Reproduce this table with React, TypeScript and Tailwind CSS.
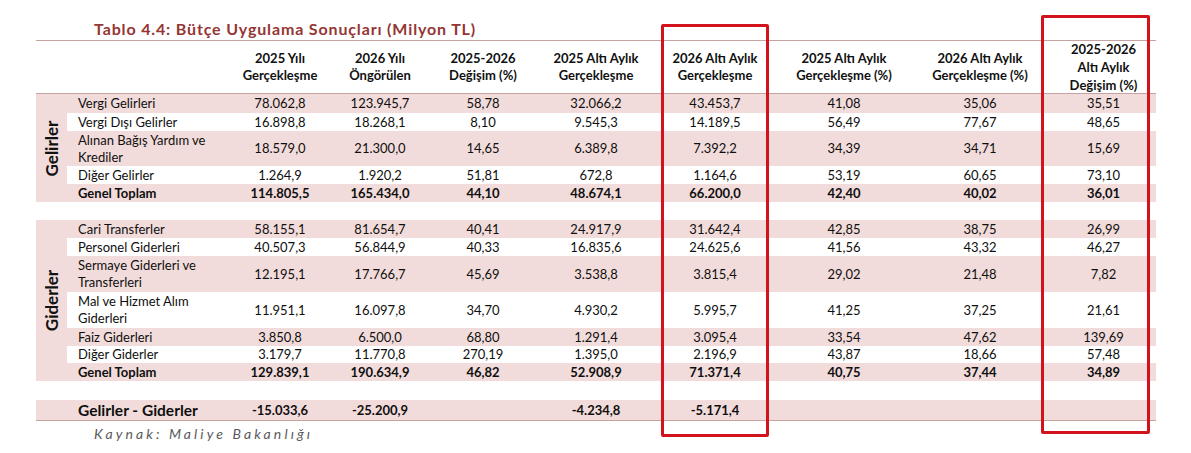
import React from "react"

type Row = {
    label: React.ReactNode
    values: string[]
    pink?: boolean
    bold?: boolean
    h?: string
}

const gelirler: Row[] = [
    { label: "Vergi Gelirleri", values: ["78.062,8", "123.945,7", "58,78", "32.066,2", "43.453,7", "41,08", "35,06", "35,51"], pink: true, h: "h-[19px]" },
    { label: "Vergi Dışı Gelirler", values: ["16.898,8", "18.268,1", "8,10", "9.545,3", "14.189,5", "56,49", "77,67", "48,65"] },
    { label: <>Alınan Bağış Yardım ve<br />Krediler</>, values: ["18.579,0", "21.300,0", "14,65", "6.389,8", "7.392,2", "34,39", "34,71", "15,69"], pink: true, h: "h-[35px]" },
    { label: "Diğer Gelirler", values: ["1.264,9", "1.920,2", "51,81", "672,8", "1.164,6", "53,19", "60,65", "73,10"] },
    { label: "Genel Toplam", values: ["114.805,5", "165.434,0", "44,10", "48.674,1", "66.200,0", "42,40", "40,02", "36,01"], pink: true, bold: true },
]

const giderler: Row[] = [
    { label: "Cari Transferler", values: ["58.155,1", "81.654,7", "40,41", "24.917,9", "31.642,4", "42,85", "38,75", "26,99"], pink: true },
    { label: "Personel Giderleri", values: ["40.507,3", "56.844,9", "40,33", "16.835,6", "24.625,6", "41,56", "43,32", "46,27"] },
    { label: <>Sermaye Giderleri ve<br />Transferleri</>, values: ["12.195,1", "17.766,7", "45,69", "3.538,8", "3.815,4", "29,02", "21,48", "7,82"], pink: true, h: "h-[36px]" },
    { label: <>Mal ve Hizmet Alım<br />Giderleri</>, values: ["11.951,1", "16.097,8", "34,70", "4.930,2", "5.995,7", "41,25", "37,25", "21,61"], h: "h-[36px]" },
    { label: "Faiz Giderleri", values: ["3.850,8", "6.500,0", "68,80", "1.291,4", "3.095,4", "33,54", "47,62", "139,69"], pink: true },
    { label: "Diğer Giderler", values: ["3.179,7", "11.770,8", "270,19", "1.395,0", "2.196,9", "43,87", "18,66", "57,48"], h: "h-[17px]" },
    { label: "Genel Toplam", values: ["129.839,1", "190.634,9", "46,82", "52.908,9", "71.371,4", "40,75", "37,44", "34,89"], pink: true, bold: true },
]

const headers: React.ReactNode[] = [
    <>2025 Yılı<br />Gerçekleşme</>,
    <>2026 Yılı<br />Öngörülen</>,
    <>2025-2026<br />Değişim (%)</>,
    <>2025 Altı Aylık<br />Gerçekleşme</>,
    <>2026 Altı Aylık<br />Gerçekleşme</>,
    <>2025 Altı Aylık<br />Gerçekleşme (%)</>,
    <>2026 Altı Aylık<br />Gerçekleşme (%)</>,
    <>2025-2026<br />Altı Aylık<br />Değişim (%)</>,
]

const widths = ["w-[31px]", "w-[158px]", "w-[110px]", "w-[90px]", "w-[116px]", "w-[110px]", "w-[128px]", "w-[130px]", "w-[142px]", "w-[105px]"]

function GroupRows({ name, rows }: { name: string; rows: Row[] }) {
    return (
        <div className="flex bg-white">
            <div className={`${widths[0]} flex shrink-0 items-center justify-center bg-[#f2dcdb]`}>
                <span className="-rotate-90 whitespace-nowrap text-[17px] font-bold leading-[17px] text-[#111]">{name}</span>
            </div>
            <div className="flex flex-col">
                {rows.map((r, i) => (
                    <div key={i} className={`flex ${r.h ?? "h-[18px]"} ${r.pink ? "bg-[#f2dcdb]" : "bg-white"} ${r.bold ? "font-bold" : ""}`}>
                        <div className={`${widths[1]} flex shrink-0 items-center pl-[11px]`}>
                            <span>{r.label}</span>
                        </div>
                        {r.values.map((v, j) => (
                            <div key={j} className={`${widths[j + 2]} flex shrink-0 items-center justify-center`}>{v}</div>
                        ))}
                    </div>
                ))}
            </div>
        </div>
    )
}

export default function App() {
    return (
        <div className="relative h-[453px] w-[1191px] overflow-hidden bg-white font-['Lato','Liberation_Sans',sans-serif] text-[13px] leading-[17px] text-[#0f0f0f]">
            <div className="h-[40px] pl-[94px] pt-[19px]">
                <h1 className="text-[16px] font-bold leading-[20px] tracking-[0.85px] text-[#943634]">
                    Tablo 4.4: Bütçe Uygulama Sonuçları (Milyon TL)
                </h1>
            </div>

            <div className="ml-[36px] flex w-[1120px] flex-col">
                {/* header */}
                <div className="flex h-[54px] border-y border-[#c6a2a1] font-bold text-[#111]">
                    <div className={`${widths[0]} shrink-0`} />
                    <div className={`${widths[1]} shrink-0`} />
                    {headers.map((h, i) => (
                        <div key={i} className={`${widths[i + 2]} flex shrink-0 items-center justify-center text-center ${i === 7 ? "leading-[18px]" : ""}`}>
                            <span>{h}</span>
                        </div>
                    ))}
                </div>

                <GroupRows name="Gelirler" rows={gelirler} />
                <div className="h-[18px]" />
                <GroupRows name="Giderler" rows={giderler} />
                <div className="h-[19px]" />

                <div className="flex h-[21px] border-b border-[#c6a2a1] bg-[#f2dcdb] font-bold">
                    <div className={`${widths[0]} shrink-0`} />
                    <div className={`${widths[1]} flex shrink-0 items-center pl-[11px] text-[15.5px] leading-[20px]`}>Gelirler - Giderler</div>
                    {["-15.033,6", "-25.200,9", "", "-4.234,8", "-5.171,4", "", "", ""].map((v, i) => (
                        <div key={i} className={`${widths[i + 2]} flex shrink-0 items-center justify-center`}>{v}</div>
                    ))}
                </div>
            </div>

            <p className="mt-[4px] pl-[94px] text-[14px] italic leading-[18px] tracking-[3.1px] text-[#5a5a5a]">
                Kaynak: Maliye Bakanlığı
            </p>

            {/* highlight boxes */}
            <div className="absolute left-[661px] top-[24px] h-[413px] w-[108px] rounded-[2px] border-[3px] border-[#d3131c]" />
            <div className="absolute left-[1041px] top-[15px] h-[419px] w-[109px] rounded-[2px] border-[3px] border-[#d3131c]" />
        </div>
    )
}
